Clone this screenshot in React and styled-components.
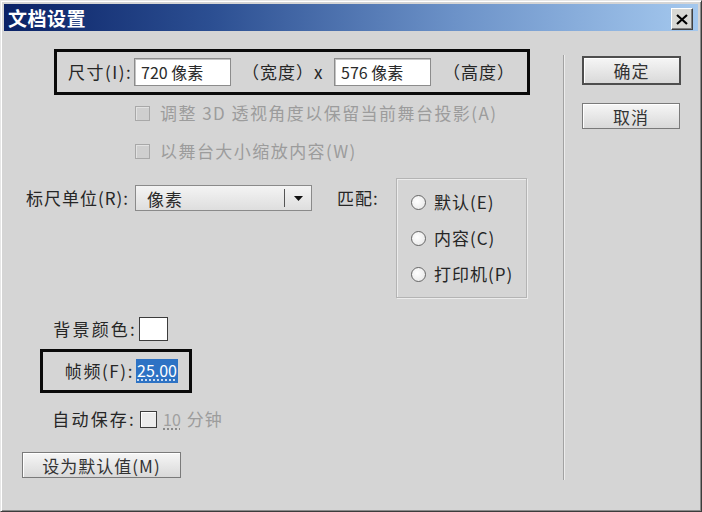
import React from "react";
import styled, { createGlobalStyle } from "styled-components";

const GlobalStyle = createGlobalStyle`
  html, body {
    margin: 0;
    padding: 0;
    background: #d5d5d5;
  }
  body {
    font-family: "Noto Sans CJK SC", "Noto Sans", sans-serif;
    color: #262626;
  }
`;

const Window = styled.div`
  width: 702px;
  height: 512px;
  box-sizing: border-box;
  padding: 3px;
  background: #d5d5d5;
  border: 1px solid;
  border-color: #e6e6e6 #3c3c3c #3c3c3c #e6e6e6;
  box-shadow: inset 1px 1px 0 #ffffff, inset -1px -1px 0 #8a8a8a;
  display: flex;
  flex-direction: column;
  overflow: hidden;
`;

const TitleBar = styled.div`
  height: 27px;
  flex: none;
  display: flex;
  align-items: flex-start;
  justify-content: space-between;
  background: linear-gradient(to right, #0a2266 0%, #2c4f92 30%, #6c92c8 65%, #a4c8ee 100%);
`;

const Title = styled.span`
  color: #ffffff;
  font-weight: 700;
  font-size: 19px;
  line-height: 27px;
  padding-left: 4px;
  letter-spacing: 0.5px;
`;

const CloseButton = styled.button`
  width: 22px;
  height: 22px;
  margin: 4px 5px 0 0;
  padding: 0;
  box-sizing: border-box;
  background: #d8d8d4;
  border: 1px solid;
  border-color: #ffffff #404040 #404040 #ffffff;
  box-shadow: inset -1px -1px 0 #808080;
  display: flex;
  align-items: center;
  justify-content: center;
`;

const Body = styled.div`
  flex: 1;
  display: flex;
`;

const LeftPane = styled.div`
  width: 559px;
  flex: none;
  display: flex;
  flex-direction: column;
  align-items: flex-start;
`;

const Separator = styled.div`
  width: 1px;
  height: 425px;
  margin-top: 24px;
  background: #a2a2a2;
  box-shadow: 1px 0 0 #ececec;
  flex: none;
`;

const RightPane = styled.div`
  display: flex;
  flex-direction: column;
  align-items: flex-start;
  padding: 25px 0 0 18px;
  gap: 18px;
`;

const Text = styled.span`
  display: inline-block;
  font-size: 17px;
  line-height: 24px;
  white-space: nowrap;
  color: ${(p) => (p.$muted ? "#9c9c9c" : "#262626")};
  letter-spacing: ${(p) => p.$ls ?? 1}px;
  margin-left: ${(p) => p.$ml || 0}px;
  width: ${(p) => (p.$w ? `${p.$w}px` : "auto")};
`;

const RightLabel = styled(Text)`
  text-align: right;
`;

const HighlightBox = styled.div`
  box-sizing: border-box;
  border: 3px solid #0a0a0a;
  display: flex;
  align-items: center;
  margin-left: ${(p) => p.$ml}px;
  margin-top: ${(p) => p.$mt}px;
  width: ${(p) => p.$w}px;
  height: ${(p) => p.$h}px;
  padding-left: ${(p) => p.$pl || 0}px;
`;

const Field = styled.div`
  box-sizing: border-box;
  width: 97px;
  height: 28px;
  flex: none;
  margin-left: ${(p) => p.$ml || 0}px;
  background: #ffffff;
  border: 1px solid #8c8c8c;
  box-shadow: inset 1px 1px 0 #c4c4c4;
  padding-left: 6px;
  font-size: 16px;
  line-height: 26px;
  color: #2a2a2a;
  white-space: nowrap;
`;

const CheckList = styled.div`
  margin: -1px 0 0 131px;
  display: flex;
  flex-direction: column;
`;

const CheckRow = styled.div`
  height: 38px;
  display: flex;
  align-items: center;
`;

const Checkbox = styled.span`
  box-sizing: border-box;
  width: ${(p) => p.$size || 15}px;
  height: ${(p) => p.$size || 15}px;
  flex: none;
  border: 1px solid ${(p) => (p.$disabled ? "#a8a8a8" : "#3c3c3c")};
  background: ${(p) => (p.$disabled ? "#cfcfcf" : "#ececec")};
  box-shadow: ${(p) => (p.$disabled ? "inset 1px 1px 0 #e2e2e2" : "inset 1px 1px 0 #ffffff")};
  margin-right: ${(p) => p.$mr || 0}px;
  margin-left: ${(p) => p.$ml || 0}px;
`;

const RulerRow = styled.div`
  display: flex;
  align-items: flex-start;
  margin-top: 8px;
  padding-left: 22px;
`;

const RulerControls = styled.div`
  display: flex;
  align-items: center;
  height: 26px;
  margin-top: 7px;
`;

const Select = styled.div`
  box-sizing: border-box;
  width: 177px;
  height: 26px;
  border: 1px solid #8a8a8a;
  background: linear-gradient(#f4f4f4, #dedede);
  display: flex;
  align-items: center;
  padding-left: 11px;
  font-size: 17px;
  letter-spacing: 1px;
  color: #2a2a2a;
`;

const SelectValue = styled.span`
  flex: 1;
`;

const SelectDivider = styled.span`
  width: 1px;
  height: 18px;
  background: #555;
`;

const SelectArrow = styled.span`
  width: 26px;
  display: flex;
  justify-content: center;
  align-items: center;
`;

const GroupBox = styled.div`
  box-sizing: border-box;
  width: 131px;
  height: 120px;
  border: 1px solid #b4b4b4;
  box-shadow: inset 1px 1px 0 #ececec, 1px 1px 0 #ececec;
  padding: 5px 0 0 14px;
  display: flex;
  flex-direction: column;
`;

const RadioRow = styled.div`
  height: 36px;
  display: flex;
  align-items: center;
  gap: 8px;
`;

const Radio = styled.span`
  box-sizing: border-box;
  width: 15px;
  height: 15px;
  border-radius: 50%;
  border: 1px solid #666;
  background: radial-gradient(circle at 40% 40%, #ffffff, #e4e4e4);
  flex: none;
`;

const FormRow = styled.div`
  display: flex;
  align-items: center;
  height: ${(p) => p.$h || 24}px;
  margin-top: ${(p) => p.$mt || 0}px;
`;

const Swatch = styled.span`
  box-sizing: border-box;
  width: 29px;
  height: 24px;
  margin-left: 2px;
  background: #ffffff;
  border: 1px solid #3c3c3c;
`;

const Selected = styled.span`
  margin-left: 2px;
  height: 24px;
  padding: 0 1px;
  background: #2d72c4;
  color: #ffffff;
  font-size: 16px;
  line-height: 22px;
  text-decoration: underline dotted #ffffff;
  text-underline-offset: 3px;
`;

const LinkNumber = styled.span`
  margin-left: 6px;
  font-size: 16px;
  color: #a0a0a0;
  text-decoration: underline dotted #707070;
  text-underline-offset: 3px;
`;

const Button = styled.button`
  box-sizing: border-box;
  width: ${(p) => p.$w}px;
  height: ${(p) => p.$h}px;
  margin: ${(p) => p.$m || 0};
  padding: 0;
  font-family: inherit;
  font-size: 17px;
  color: #333;
  letter-spacing: 1px;
  background: linear-gradient(#f6f6f6, #d9d9d9);
  border: ${(p) => (p.$default ? "2px solid #4e4e4e" : "1px solid #7a7a7a")};
  box-shadow: inset 1px 1px 0 #ffffff;
  display: flex;
  align-items: center;
  justify-content: center;
`;

export default function App() {
  return (
    <>
      <GlobalStyle />
      <Window>
        <TitleBar>
          <Title>文档设置</Title>
          <CloseButton aria-label="关闭">
            <svg width="12" height="11" viewBox="0 0 12 11">
              <path d="M1 1 L11 10 M11 1 L1 10" stroke="#000" strokeWidth="2.2" />
            </svg>
          </CloseButton>
        </TitleBar>
        <Body>
          <LeftPane>
            <HighlightBox $ml={50} $mt={18} $w={476} $h={46} $pl={11}>
              <Text $w={64} $ls={1.5}>尺寸(I):</Text>
              <Field $ml={2}>720 像素</Field>
              <Text $ml={11} $w={79}>（宽度）x</Text>
              <Field $ml={13}>576 像素</Field>
              <Text $ml={12}>（高度）</Text>
            </HighlightBox>

            <CheckList>
              <CheckRow>
                <Checkbox $disabled $mr={10} />
                <Text $muted $ls={1.45}>调整 3D 透视角度以保留当前舞台投影(A)</Text>
              </CheckRow>
              <CheckRow>
                <Checkbox $disabled $mr={10} />
                <Text $muted $ls={1.45}>以舞台大小缩放内容(W)</Text>
              </CheckRow>
            </CheckList>

            <RulerRow>
              <RulerControls>
                <Text $w={109}>标尺单位(R):</Text>
                <Select>
                  <SelectValue>像素</SelectValue>
                  <SelectDivider />
                  <SelectArrow>
                    <svg width="9" height="5" viewBox="0 0 9 5">
                      <path d="M0 0 H9 L4.5 5 Z" fill="#111" />
                    </svg>
                  </SelectArrow>
                </Select>
                <Text $ml={25} $w={59}>匹配:</Text>
              </RulerControls>
              <GroupBox>
                <RadioRow>
                  <Radio />
                  <Text>默认(E)</Text>
                </RadioRow>
                <RadioRow>
                  <Radio />
                  <Text>内容(C)</Text>
                </RadioRow>
                <RadioRow>
                  <Radio />
                  <Text>打印机(P)</Text>
                </RadioRow>
              </GroupBox>
            </RulerRow>

            <FormRow $mt={19}>
              <RightLabel $w={133} $ls={2.2}>背景颜色:</RightLabel>
              <Swatch />
            </FormRow>

            <HighlightBox $ml={36} $mt={8} $w={152} $h={44}>
              <RightLabel $w={91} $ls={1.6}>帧频(F):</RightLabel>
              <Selected>25.00</Selected>
            </HighlightBox>

            <FormRow $mt={14}>
              <RightLabel $w={132} $ls={2.2}>自动保存:</RightLabel>
              <Checkbox $size={17} $ml={4} />
              <LinkNumber>10</LinkNumber>
              <Text $muted $ml={6}>分钟</Text>
            </FormRow>

            <Button $w={159} $h={26} $m="21px 0 0 18px">
              设为默认值(M)
            </Button>
          </LeftPane>
          <Separator />
          <RightPane>
            <Button $w={99} $h={29} $default>确定</Button>
            <Button $w={98} $h={26}>取消</Button>
          </RightPane>
        </Body>
      </Window>
    </>
  );
}
